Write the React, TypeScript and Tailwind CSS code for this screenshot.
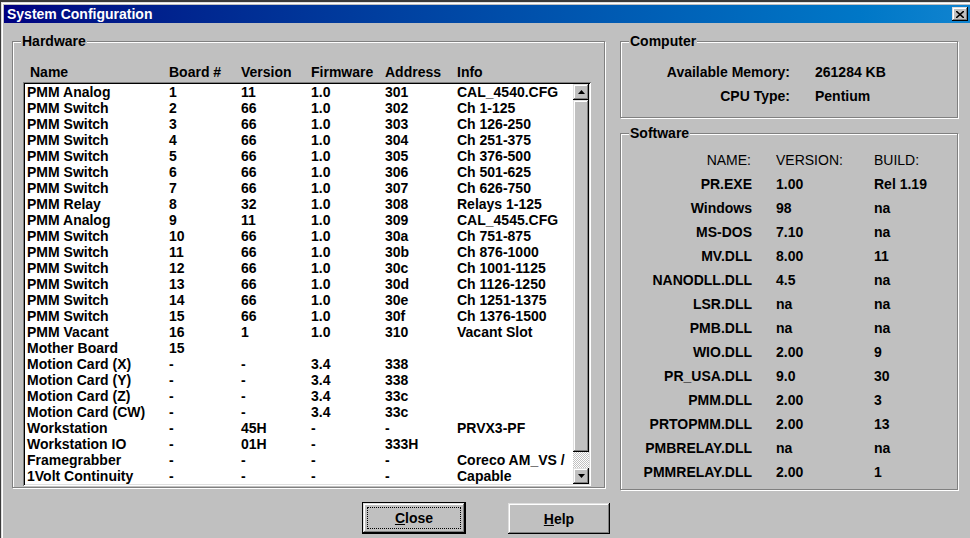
import React from "react";

const hardware: string[][] = [
  ["PMM Analog", "1", "11", "1.0", "301", "CAL_4540.CFG"],
  ["PMM Switch", "2", "66", "1.0", "302", "Ch 1-125"],
  ["PMM Switch", "3", "66", "1.0", "303", "Ch 126-250"],
  ["PMM Switch", "4", "66", "1.0", "304", "Ch 251-375"],
  ["PMM Switch", "5", "66", "1.0", "305", "Ch 376-500"],
  ["PMM Switch", "6", "66", "1.0", "306", "Ch 501-625"],
  ["PMM Switch", "7", "66", "1.0", "307", "Ch 626-750"],
  ["PMM Relay", "8", "32", "1.0", "308", "Relays 1-125"],
  ["PMM Analog", "9", "11", "1.0", "309", "CAL_4545.CFG"],
  ["PMM Switch", "10", "66", "1.0", "30a", "Ch 751-875"],
  ["PMM Switch", "11", "66", "1.0", "30b", "Ch 876-1000"],
  ["PMM Switch", "12", "66", "1.0", "30c", "Ch 1001-1125"],
  ["PMM Switch", "13", "66", "1.0", "30d", "Ch 1126-1250"],
  ["PMM Switch", "14", "66", "1.0", "30e", "Ch 1251-1375"],
  ["PMM Switch", "15", "66", "1.0", "30f", "Ch 1376-1500"],
  ["PMM Vacant", "16", "1", "1.0", "310", "Vacant Slot"],
  ["Mother Board", "15", "", "", "", ""],
  ["Motion Card (X)", "-", "-", "3.4", "338", ""],
  ["Motion Card (Y)", "-", "-", "3.4", "338", ""],
  ["Motion Card (Z)", "-", "-", "3.4", "33c", ""],
  ["Motion Card (CW)", "-", "-", "3.4", "33c", ""],
  ["Workstation", "-", "45H", "-", "-", "PRVX3-PF"],
  ["Workstation IO", "-", "01H", "-", "333H", ""],
  ["Framegrabber", "-", "-", "-", "-", "Coreco AM_VS /"],
  ["1Volt Continuity", "-", "-", "-", "-", "Capable"],
];

const software: string[][] = [
  ["PR.EXE", "1.00", "Rel 1.19"],
  ["Windows", "98", "na"],
  ["MS-DOS", "7.10", "na"],
  ["MV.DLL", "8.00", "11"],
  ["NANODLL.DLL", "4.5", "na"],
  ["LSR.DLL", "na", "na"],
  ["PMB.DLL", "na", "na"],
  ["WIO.DLL", "2.00", "9"],
  ["PR_USA.DLL", "9.0", "30"],
  ["PMM.DLL", "2.00", "3"],
  ["PRTOPMM.DLL", "2.00", "13"],
  ["PMBRELAY.DLL", "na", "na"],
  ["PMMRELAY.DLL", "2.00", "1"],
];

const raised =
  "bg-[#c0c0c0] shadow-[inset_-1px_-1px_0_#000,inset_1px_1px_0_#dfdfdf,inset_-2px_-2px_0_#808080,inset_2px_2px_0_#fff]";

function Group({ label, className, children }: { label: string; className: string; children: React.ReactNode }) {
  return (
    <div className={`relative border border-[#808080] shadow-[inset_1px_1px_0_#fff,1px_1px_0_#fff] ${className}`}>
      <span className="absolute left-[8px] -top-[9px] bg-[#c0c0c0] px-[1px] leading-[16px]">{label}</span>
      {children}
    </div>
  );
}

function Arrow({ down }: { down?: boolean }) {
  return (
    <svg width="7" height="4" viewBox="0 0 7 4" className={down ? "rotate-180" : ""}>
      <path d="M3.5 0 L7 4 L0 4 Z" fill="#000" />
    </svg>
  );
}

const cols = "grid grid-cols-[144px_72px_70px_74px_72px_1fr]";

export default function App() {
  return (
    <div className="w-[970px] h-[538px] overflow-hidden bg-[#3a3a3a] pt-[2px] pl-[1px] font-['Liberation_Sans',Arial,sans-serif] text-[14px] font-bold text-black">
      <div className="h-[600px] bg-[#c0c0c0] pt-[3px] pl-[3px] shadow-[inset_1px_1px_0_#dfdfdf,inset_2px_2px_0_#fff]">
        {/* Title bar */}
        <div className="h-[18px] flex items-center justify-between bg-gradient-to-r from-[#000080] to-[#1084d0] pl-[3px] pr-[2px]">
          <span className="text-white leading-[18px]">System Configuration</span>
          <div className={`w-[16px] h-[14px] flex items-center justify-center ${raised}`}>
            <svg width="8" height="7" viewBox="0 0 8 7">
              <path d="M0 0 L8 7 M8 0 L0 7" stroke="#000" strokeWidth="1.6" />
            </svg>
          </div>
        </div>

        {/* Body */}
        <div className="flex pt-[18px] pl-[8px]">
          <Group label="Hardware" className="w-[593px] h-[447px] pt-[22px] pl-[10px]">
            <div className={`${cols} w-[548px] pl-[2px] leading-[16px]`}>
              <span className="pl-[5px]">Name</span>
              <span>Board #</span>
              <span>Version</span>
              <span>Firmware</span>
              <span>Address</span>
              <span>Info</span>
            </div>
            <div className="mt-[2px] w-[568px] h-[404px] p-[2px] bg-white flex shadow-[inset_1px_1px_0_#808080,inset_-1px_-1px_0_#fff,inset_2px_2px_0_#000,inset_-2px_-2px_0_#dfdfdf]">
              <div className="flex-1 overflow-hidden">
                {hardware.map((r, i) => (
                  <div key={i} className={`${cols} h-[16px] leading-[16px] whitespace-nowrap`}>
                    {r.map((c, j) => (
                      <span key={j} className={j === 0 ? "pl-[2px]" : ""}>
                        {c}
                      </span>
                    ))}
                  </div>
                ))}
              </div>
              <div className="w-[16px] flex flex-col">
                <div className={`h-[16px] flex items-center justify-center ${raised}`}>
                  <Arrow />
                </div>
                <div className={`h-[352px] ${raised}`} />
                <div className="h-[16px] bg-[repeating-conic-gradient(#c0c0c0_0_25%,#fff_0_50%)] bg-[length:2px_2px]" />
                <div className={`h-[16px] flex items-center justify-center ${raised}`}>
                  <Arrow down />
                </div>
              </div>
            </div>
          </Group>

          <div className="ml-[15px] flex flex-col gap-[15px]">
            <Group label="Computer" className="w-[338px] h-[77px] pt-[18px]">
              {[
                ["Available Memory:", "261284 KB"],
                ["CPU Type:", "Pentium"],
              ].map(([k, v]) => (
                <div key={k} className="flex leading-[24px]">
                  <span className="w-[169px] text-right">{k}</span>
                  <span className="ml-[25px]">{v}</span>
                </div>
              ))}
            </Group>
            <Group label="Software" className="w-[338px] h-[357px] pt-[14px]">
              <div className="grid grid-cols-[131px_98px_1fr] leading-[24px]">
                <span className="text-right pr-[1px] font-normal">NAME:</span>
                <span className="pl-[24px] font-normal">VERSION:</span>
                <span className="pl-[24px] font-normal">BUILD:</span>
                {software.map((r) => (
                  <React.Fragment key={r[0]}>
                    <span className="text-right">{r[0]}</span>
                    <span className="pl-[24px]">{r[1]}</span>
                    <span className="pl-[24px]">{r[2]}</span>
                  </React.Fragment>
                ))}
              </div>
            </Group>
          </div>
        </div>

        {/* Buttons */}
        <div className="flex justify-center gap-[42px] mt-[12px] pr-[2px]">
          <div className="w-[104px] h-[32px] border border-black">
            <div className={`w-full h-full p-[4px] ${raised}`}>
              <div className="w-full h-full border border-dotted border-black flex items-center justify-center leading-[16px]">
                <span>
                  <span className="underline">C</span>lose
                </span>
              </div>
            </div>
          </div>
          <div className={`w-[102px] h-[31px] mt-[1px] flex items-center justify-center leading-[16px] ${raised}`}>
            <span>
              <span className="underline">H</span>elp
            </span>
          </div>
        </div>
      </div>
    </div>
  );
}
